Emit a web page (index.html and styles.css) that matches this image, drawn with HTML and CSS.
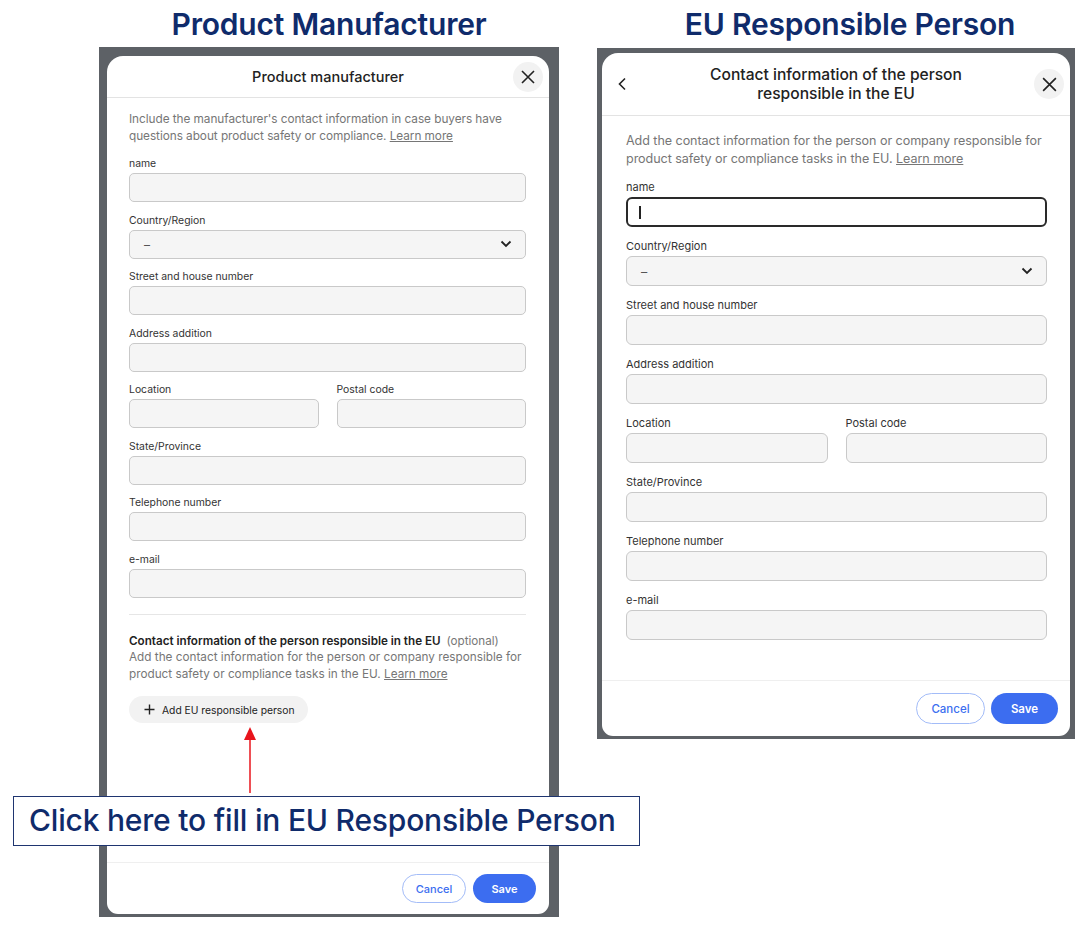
FILE: index.html
```html
<!DOCTYPE html>
<html>
<head>
<meta charset="UTF-8">
<title>Product Manufacturer / EU Responsible Person</title>
<link rel="stylesheet" href="styles.css">
</head>
<body>
<div id="page">

  <div class="panel panel-left">
    <h1 class="title">Product Manufacturer</h1>
    <div class="frame frame-left">
      <div class="modal">
        <div class="modal-head">
          <span></span>
          <span class="head-title">Product manufacturer</span>
          <span class="close"><svg width="16" height="16" viewBox="0 0 16 16"><path d="M2 2L14 14M14 2L2 14" stroke="#222" stroke-width="1.6" fill="none"/></svg></span>
        </div>
        <div class="modal-body">
          <p class="intro">Include the manufacturer's contact information in case buyers have questions about product safety or compliance. <a href="#">Learn more</a></p>
          <div class="fields">
            <div class="field"><label>name</label><div class="input"></div></div>
            <div class="field"><label>Country/Region</label><div class="input select"><span class="dash">–</span><svg width="12" height="8" viewBox="0 0 12 8"><path d="M1.5 1.5L6 6L10.5 1.5" stroke="#222" stroke-width="1.8" fill="none"/></svg></div></div>
            <div class="field"><label>Street and house number</label><div class="input"></div></div>
            <div class="field"><label>Address addition</label><div class="input"></div></div>
            <div class="row">
              <div class="field"><label>Location</label><div class="input"></div></div>
              <div class="field"><label>Postal code</label><div class="input"></div></div>
            </div>
            <div class="field"><label>State/Province</label><div class="input"></div></div>
            <div class="field"><label>Telephone number</label><div class="input"></div></div>
            <div class="field"><label>e-mail</label><div class="input"></div></div>
          </div>
          <div class="eu">
            <p class="eu-head">Contact information of the person responsible in the EU <span class="opt">(optional)</span></p>
            <p class="eu-desc">Add the contact information for the person or company responsible for product safety or compliance tasks in the EU. <a href="#">Learn more</a></p>
            <span class="add-btn"><svg width="11" height="11" viewBox="0 0 11 11"><path d="M5.5 0.5V10.5M0.5 5.5H10.5" stroke="#222" stroke-width="1.4"/></svg>Add EU responsible person</span>
          </div>
        </div>
        <div class="modal-foot">
          <span class="btn btn-cancel">Cancel</span>
          <span class="btn btn-save">Save</span>
        </div>
      </div>
    </div>
  </div>

  <div class="panel panel-right">
    <h1 class="title">EU Responsible Person</h1>
    <div class="frame frame-right">
      <div class="modal modal-right">
        <div class="modal-head">
          <span class="back"><svg width="14" height="14" viewBox="0 0 14 14"><path d="M9 1.5L3.5 7L9 12.5" stroke="#222" stroke-width="1.6" fill="none"/></svg></span>
          <span class="head-title">Contact information of the person<br>responsible in the EU</span>
          <span class="close"><svg width="17" height="17" viewBox="0 0 16 16"><path d="M2 2L14 14M14 2L2 14" stroke="#222" stroke-width="1.5" fill="none"/></svg></span>
        </div>
        <div class="modal-body">
          <p class="intro">Add the contact information for the person or company responsible for product safety or compliance tasks in the EU. <a href="#">Learn more</a></p>
          <div class="fields">
            <div class="field"><label>name</label><div class="input focus"><span class="caret"></span></div></div>
            <div class="field"><label>Country/Region</label><div class="input select"><span class="dash">–</span><svg width="12" height="8" viewBox="0 0 12 8"><path d="M1.5 1.5L6 6L10.5 1.5" stroke="#222" stroke-width="1.8" fill="none"/></svg></div></div>
            <div class="field"><label>Street and house number</label><div class="input"></div></div>
            <div class="field"><label>Address addition</label><div class="input"></div></div>
            <div class="row">
              <div class="field"><label>Location</label><div class="input"></div></div>
              <div class="field"><label>Postal code</label><div class="input"></div></div>
            </div>
            <div class="field"><label>State/Province</label><div class="input"></div></div>
            <div class="field"><label>Telephone number</label><div class="input"></div></div>
            <div class="field"><label>e-mail</label><div class="input"></div></div>
          </div>
        </div>
        <div class="modal-foot">
          <span class="btn btn-cancel">Cancel</span>
          <span class="btn btn-save">Save</span>
        </div>
      </div>
    </div>
  </div>

  <svg class="arrow" width="14" height="66" viewBox="0 0 14 66"><path d="M7 0L13 13H1Z" fill="#e8141c"/><path d="M7 12V66" stroke="#e8141c" stroke-width="1.5"/></svg>
  <div class="callout">Click here to fill in EU Responsible Person</div>
</div>
</body>
</html>
```

FILE: styles.css
```css
*{margin:0;padding:0;box-sizing:border-box}
body{font-family:Inter,"Noto Sans",sans-serif;background:#fff;color:#222}
#page{position:relative;width:1080px;height:926px;display:flex;padding-left:99px;gap:38px}
.panel{display:flex;flex-direction:column}
.panel-left{width:460px}
.panel-right{width:478px}
.title{font-size:30px;font-weight:600;color:#0f2b6b;text-align:center;height:47px;line-height:48px;letter-spacing:-0.2px}
.panel-right .title{padding-left:28px;height:48px}

.frame{background:#5d6166;display:flex}
.frame-left{height:870px;padding:9px 10px 3px 8px}
.frame-right{height:691px;padding:5px 5px 3px 5px}

.modal{flex:1;background:#fff;border-radius:16px 16px 11px 11px;display:flex;flex-direction:column}
.modal-head{display:grid;grid-template-columns:40px 1fr 40px;align-items:center;height:42px;border-bottom:1px solid #e3e3e3;padding:0 6px}
.head-title{text-align:center;font-size:14.5px;font-weight:500;color:#222}
.close{justify-self:end;width:30px;height:30px;border-radius:50%;background:#f2f2f2;display:flex;align-items:center;justify-content:center}
.back{width:30px;height:30px;display:flex;align-items:center;justify-content:center}

.modal-body{flex:1;padding:12.5px 23px 0 22px}
.intro{font-size:11.8px;line-height:17px;color:#767676;letter-spacing:-0.05px}
.intro a,.eu-desc a{color:#767676}
.fields{display:flex;flex-direction:column;gap:11.5px;margin-top:12.5px}
.field label{display:block;font-size:10.4px;line-height:14px;color:#333;margin-bottom:2px}
.input{height:29px;border:1px solid #c9c9c9;border-radius:5px;background:#f5f5f5}
.row{display:grid;grid-template-columns:1fr 1fr;gap:18px}
.select{display:flex;align-items:center;justify-content:space-between;padding:0 13px 0 14px}
.dash{font-size:12px;color:#555}

.eu{margin-top:16.5px;border-top:1px solid #e6e6e6;padding-top:18px}
.eu-head{font-size:11.65px;line-height:16px;font-weight:600;color:#222}
.opt{font-weight:400;color:#777;margin-left:3px}
.eu-desc{font-size:11.75px;line-height:17px;color:#767676}
.add-btn{margin-top:13px;height:27px;width:179px;border-radius:14px;background:#f2f2f2;display:flex;align-items:center;gap:7px;padding-left:15px;font-size:10.3px;color:#222}

.modal-foot{border-top:1px solid #efefef;display:flex;justify-content:flex-end;gap:7px;padding:11px 13px 11px}
.btn{height:29px;border-radius:15px;display:flex;align-items:center;justify-content:center;font-size:11px;font-weight:500}
.btn-cancel{width:64px;border:1px solid #a3bcf8;color:#3b6ef0;background:#fff}
.btn-save{width:63px;background:#3c6df0;color:#fff;font-weight:600}

.modal-right .modal-head{height:65px}
.modal-right .head-title{font-size:15.6px;line-height:19px}
.modal-right .modal-body{padding:16px 23px 40px 24px}
.modal-right .intro{font-size:12.55px;line-height:18px}
.modal-right .fields{gap:12px;margin-top:12px}
.modal-right .field label{font-size:11px;margin-bottom:3px}
.modal-right .input{height:30px;border-radius:6px}
.modal-right .focus{background:#fff;border:2px solid #2a2a2a;display:flex;align-items:center;padding-left:11px}
.caret{width:1.5px;height:13px;background:#222}
.modal-right .dash{font-size:12.5px}
.modal-right .modal-foot{gap:6px;padding:12px 12px 12px}
.modal-right .btn{height:31px;border-radius:16px;font-size:11.5px}
.modal-right .btn-cancel{width:69px}
.modal-right .btn-save{width:67px}

.arrow{position:absolute;left:243px;top:727px}
.callout{position:absolute;left:13px;top:796px;width:627px;height:50px;border:1.5px solid #1f3570;background:#fff;color:#0f2b6b;font-size:30px;font-weight:500;padding-left:15px;line-height:47px;letter-spacing:-0.2px}
```
